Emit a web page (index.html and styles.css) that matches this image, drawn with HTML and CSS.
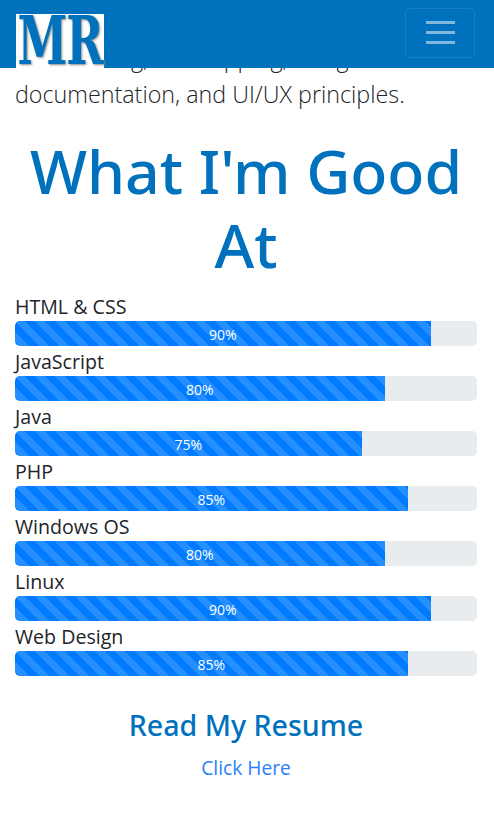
FILE: index.html
```html
<!DOCTYPE html>
<html lang="en">
<head>
<meta charset="UTF-8">
<meta name="viewport" content="width=device-width, initial-scale=1.0">
<title>My Skills</title>
<link rel="stylesheet" href="styles.css">
</head>

<body>
<nav class="navbar">
    <a class="brand" href="#"><span class="brand-text">MR</span></a>
    <button class="toggler" aria-label="Toggle navigation">
        <svg width="30" height="24" viewBox="0 0 30 24">
            <path d="M1 2.5h29M1 12.5h29M1 22.5h29" stroke="#fff" stroke-opacity="0.5" stroke-width="3" fill="none"/>
        </svg>
    </button>
</nav>

<main class="content">
    <p class="intro">Wireframing, sitemapping, design documentation, and UI/UX principles.</p>

    <h1 class="skills-title">What I'm Good At</h1>

    <div class="skill">
        <div class="skill-name">HTML &amp; CSS</div>
        <div class="progress"><div class="progress-bar" style="width: 90%">90%</div></div>
    </div>
    <div class="skill">
        <div class="skill-name">JavaScript</div>
        <div class="progress"><div class="progress-bar" style="width: 80%">80%</div></div>
    </div>
    <div class="skill">
        <div class="skill-name">Java</div>
        <div class="progress"><div class="progress-bar" style="width: 75%">75%</div></div>
    </div>
    <div class="skill">
        <div class="skill-name">PHP</div>
        <div class="progress"><div class="progress-bar" style="width: 85%">85%</div></div>
    </div>
    <div class="skill">
        <div class="skill-name">Windows OS</div>
        <div class="progress"><div class="progress-bar" style="width: 80%">80%</div></div>
    </div>
    <div class="skill">
        <div class="skill-name">Linux</div>
        <div class="progress"><div class="progress-bar" style="width: 90%">90%</div></div>
    </div>
    <div class="skill">
        <div class="skill-name">Web Design</div>
        <div class="progress"><div class="progress-bar" style="width: 85%">85%</div></div>
    </div>

    <div class="resume">
        <h2 class="resume-title">Read My Resume</h2>
        <a class="resume-link" href="#">Click Here</a>
    </div>
</main>
</body>
</html>
```

FILE: styles.css
```css
body {
    margin: 0;
    padding: 0;
    background-color: #fff;
    color: #212529;
    font-family: "Open Sans", "Noto Sans", Arial, sans-serif;
}
.navbar {
    position: fixed;
    top: 0;
    left: 0;
    right: 0;
    height: 68px;
    background-color: #0071bc;
    display: flex;
    align-items: flex-start;
    justify-content: space-between;
    padding: 0 19px 0 16px;
    box-sizing: border-box;
    z-index: 10;
}
.brand {
    margin-top: 14px;
    width: 88px;
    height: 54px;
    background-color: #fff;
    display: flex;
    align-items: center;
    justify-content: center;
    text-decoration: none;
}
.brand-text {
    color: #0071bc;
    font-family: "DejaVu Serif", serif;
    font-stretch: condensed;
    font-weight: bold;
    font-size: 50px;
    line-height: 40px;
    letter-spacing: -1px;
    text-shadow: 1px 1px 2px #888;
    transform: scaleY(1.35);
}
.toggler {
    margin-top: 8px;
    width: 70px;
    height: 50px;
    padding: 0;
    background: none;
    border: 1px solid rgba(255, 255, 255, 0.1);
    border-radius: 5px;
}
.content {
    padding: 40px 17px 0 15px;
}
.intro {
    margin: 0;
    font-size: 23.3px;
    font-weight: 300;
    line-height: 36px;
}
.skills-title {
    margin: 22px 0 9px;
    color: #0071bc;
    font-family: "Noto Sans", "Open Sans", sans-serif;
    font-size: 60.7px;
    font-weight: 500;
    line-height: 74px;
    text-align: center;
}
.skill-name {
    font-size: 19.6px;
    line-height: 32px;
    height: 30px;
}
.progress {
    height: 25px;
    background-color: #e9ecef;
    border-radius: 5px;
    overflow: hidden;
}
.progress-bar {
    height: 100%;
    background-color: #007bff;
    background-image: linear-gradient(45deg, rgba(255,255,255,.15) 25%, transparent 25%, transparent 50%, rgba(255,255,255,.15) 50%, rgba(255,255,255,.15) 75%, transparent 75%, transparent);
    background-size: 20px 20px;
    color: #fff;
    font-size: 14px;
    line-height: 28px;
    text-align: center;
}
.resume {
    margin-top: 29px;
    padding-bottom: 47px;
    text-align: center;
}
.resume-title {
    margin: 0 0 8px;
    color: #0071bc;
    font-family: "Noto Sans", "Open Sans", sans-serif;
    font-size: 28.6px;
    font-weight: 500;
    line-height: 40px;
}
.resume-link {
    color: #2a7ffb;
    font-size: 19.2px;
    line-height: 30px;
    text-decoration: none;
}
```
